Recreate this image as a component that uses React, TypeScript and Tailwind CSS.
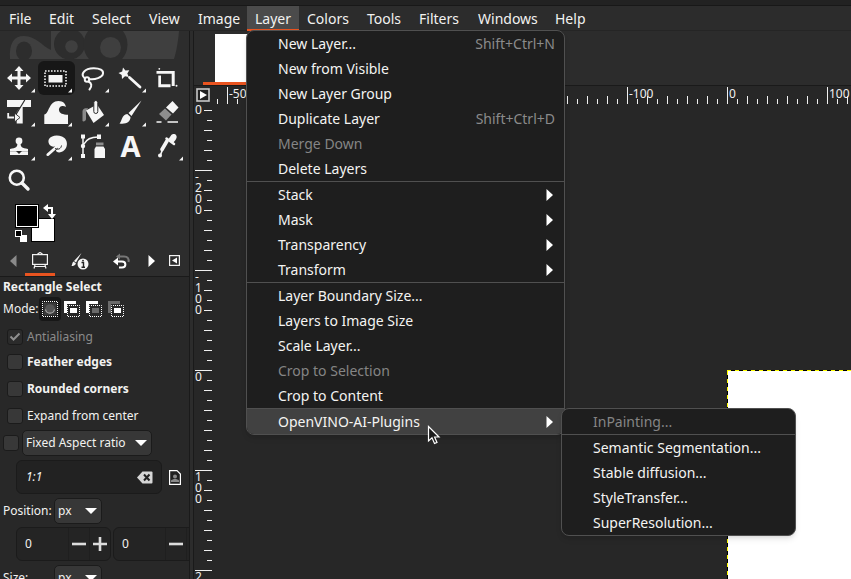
import type { ReactNode } from "react";

const MENUS = ["File", "Edit", "Select", "View", "Image", "Layer", "Colors", "Tools", "Filters", "Windows", "Help"];

type Entry = { label: string; keys?: string; disabled?: boolean; sub?: boolean; active?: boolean };

const LAYER_MENU: Entry[][] = [
  [
    { label: "New Layer...", keys: "Shift+Ctrl+N" },
    { label: "New from Visible" },
    { label: "New Layer Group" },
    { label: "Duplicate Layer", keys: "Shift+Ctrl+D" },
    { label: "Merge Down", disabled: true },
    { label: "Delete Layers" },
  ],
  [
    { label: "Stack", sub: true },
    { label: "Mask", sub: true },
    { label: "Transparency", sub: true },
    { label: "Transform", sub: true },
  ],
  [
    { label: "Layer Boundary Size..." },
    { label: "Layers to Image Size" },
    { label: "Scale Layer..." },
    { label: "Crop to Selection", disabled: true },
    { label: "Crop to Content" },
  ],
  [{ label: "OpenVINO-AI-Plugins", sub: true, active: true }],
];

const PLUGIN_MENU: Entry[][] = [
  [{ label: "InPainting...", disabled: true }],
  [
    { label: "Semantic Segmentation..." },
    { label: "Stable diffusion..." },
    { label: "StyleTransfer..." },
    { label: "SuperResolution..." },
  ],
];

function MenuGroups({ groups, children }: { groups: Entry[][]; children?: ReactNode }) {
  return (
    <>
      {groups.map((group, g) => (
        <div key={g} role="group" className={g > 0 ? "border-t border-[#505050]" : ""}>
          {group.map((e) => (
            <div key={e.label} className={e.active ? "relative rounded-b-[7px] bg-[#414141]" : ""}>
              <button
                role="menuitem"
                disabled={e.disabled}
                className={`flex h-[25px] w-full items-center justify-between pr-[9px] pl-[31px] whitespace-nowrap ${e.disabled ? "text-[#858585]" : "text-[#f4f4f2]"}`}
              >
                <span>{e.label}</span>
                {e.keys && <span className="text-[#8b8b8b]">{e.keys}</span>}
                {e.sub && (
                  <svg width="7" height="12" className="mr-[2px]" fill="#fff">
                    <path d="M0.500 0L7 6L0.500 12Z" />
                  </svg>
                )}
              </button>
              {e.active && children}
            </div>
          ))}
        </div>
      ))}
    </>
  );
}

const W = "#f6f6f6";

const TOOLS: { name: string; more?: boolean; art: ReactNode }[] = [
  {
    name: "Move",
    more: true,
    art: (
      <g fill={W}>
        <path d="M18 5l4.500 5h-3v5.500h5.500v-3l5 4.500l-5 4.500v-3h-5.500v5.500h3l-4.500 5l-4.500-5h3v-5.500h-5.500v3l-5-4.500l5-4.500v3h5.500v-5.500h-3z" />
      </g>
    ),
  },
  {
    name: "Rectangle Select",
    more: true,
    art: (
      <>
        <rect x="7" y="10" width="21" height="15" fill="none" stroke={W} strokeWidth="1.6" strokeDasharray="1.6 1.4" />
        <rect x="10.500" y="14" width="14" height="7.500" fill={W} />
      </>
    ),
  },
  {
    name: "Free Select",
    more: true,
    art: (
      <g fill="none" stroke={W} strokeWidth="2" strokeLinecap="round">
        <path d="M9.500 17C5 13 9.500 7.500 18.500 7.300C25 7.200 28.500 9.500 28 12.500C27.400 16.500 20 19 14 18" />
        <circle cx="12" cy="18.500" r="2.200" />
        <path d="M13.500 20.500C16.500 22 17.500 25 14.500 28.500" />
      </g>
    ),
  },
  {
    name: "Fuzzy Select",
    more: true,
    art: (
      <>
        <path d="M11 6.500L13.400 9.600L17.300 9.200L15.300 12.500L16.800 16L13 15.300L10 18L9.700 14L6.500 12L10.200 10.500Z" fill={W} />
        <path d="M17.500 16.500L28 26" stroke={W} strokeWidth="2.800" strokeLinecap="round" />
      </>
    ),
  },
  {
    name: "Crop",
    art: (
      <g fill={W}>
        <path d="M7.500 10H25.700V25H22.700V12.700H7.500Z" />
        <path d="M9.300 14.500H12V23.300H21.500V26.300H9.300Z" />
        <circle cx="10.300" cy="7.800" r="0.900" />
        <circle cx="27.500" cy="24.700" r="1" />
      </g>
    ),
  },
  {
    name: "Unified Transform",
    more: true,
    art: (
      <>
        <path d="M6 5H30V12H21.700V28.500H15.700V17L19.500 12H6Z" fill={W} />
        <path d="M23.800 5L15 19.500" stroke="#2b2b2b" strokeWidth="1.200" />
        <path d="M7.200 18V22.500H15" fill="none" stroke={W} strokeWidth="1.800" />
        <path d="M13.500 18L19 22.500L13.500 27Z" fill={W} stroke="#2b2b2b" strokeWidth="0.900" />
      </>
    ),
  },
  {
    name: "Warp Transform",
    more: true,
    art: (
      <path
        d="M6.300 29V19.500C11.500 18.500 10.500 6 20.500 6C25 6 27.800 8.800 27.800 12C25.500 9.800 20.500 11 21 15.300C21.300 18.300 25 19.800 30 19.800V29Z"
        fill={W}
      />
    ),
  },
  {
    name: "Bucket Fill",
    more: true,
    art: (
      <>
        <path d="M7.500 26V17C7.500 14 9 13.300 13 13L11 17V24C11 26 8.500 27 7.500 26Z" fill="#8a8a8a" />
        <path d="M11 15.500L22 9.500L29 20L18.500 28Z" fill={W} />
        <rect x="18.800" y="5.500" width="4" height="13" rx="2" fill={W} stroke="#2b2b2b" strokeWidth="1" />
      </>
    ),
  },
  {
    name: "Paintbrush",
    more: true,
    art: (
      <g fill={W}>
        <path d="M29.500 5.500L16.500 18L19.500 21Z" />
        <path d="M15.300 19L18.500 22C18.500 27 14 29.500 7.500 28.500C10 26.500 9.500 19.500 15.300 19Z" />
      </g>
    ),
  },
  {
    name: "Eraser",
    art: (
      <>
        <path d="M23.500 6L29.500 12.500L24 18.500L17 12.500Z" fill={W} />
        <path d="M16 13.500L22.500 19.500L17 25.500L10 19Z" fill="#8e8e8e" />
        <path d="M7.500 27H12.500M18.500 27H29" stroke={W} strokeWidth="1.600" />
      </>
    ),
  },
  {
    name: "Clone",
    more: true,
    art: (
      <>
        <circle cx="18" cy="12" r="3.400" fill={W} />
        <path d="M16.500 14H19.500C19.500 18 21 19 27 20V22.500H9V20C15 19 16.500 18 16.500 14Z" fill={W} />
        <path d="M9 22.500H27V26H9Z" fill={W} />
        <path d="M15 22H21L18 25Z" fill="#2b2b2b" />
      </>
    ),
  },
  {
    name: "Smudge",
    more: true,
    art: (
      <>
        <path
          d="M11 10C13 6.500 19 5.500 24 7.500C29 9.500 30 15 28 19C26 23 21 24.500 18.500 22.500C17 21 20 20.500 20 18.500L11 26.500C9 28 7.500 26 9 24.500L17 17.500C12.500 18.500 9 14 11 10Z"
          fill={W}
        />
        <path d="M17 19.500C20 21 23 20 23.500 16.500" fill="none" stroke="#2b2b2b" strokeWidth="1" />
      </>
    ),
  },
  {
    name: "Paths",
    art: (
      <>
        <path d="M8 8V26M9 15C12 9 17 8 23 8" fill="none" stroke={W} strokeWidth="1.500" />
        <path d="M6 5.500H10V9.500H6ZM6 25H10V29H6ZM22 5.500H26V10H22Z" fill={W} />
        <circle cx="8" cy="17" r="2.200" fill={W} />
        <rect x="21" y="13.500" width="7.500" height="2.800" fill="#8e8e8e" />
        <path d="M19.500 20L21 17.500H28.500L30 20V29H19.500Z" fill={W} />
      </>
    ),
  },
  { name: "Text", art: null },
  {
    name: "Color Picker",
    more: true,
    art: (
      <>
        <path d="M18 12L13 20.500" stroke={W} strokeWidth="3.600" strokeLinecap="round" />
        <path d="M14 19L11.500 26" stroke={W} strokeWidth="1.600" />
        <path d="M17.500 9.500L25 15" stroke={W} strokeWidth="2.500" strokeLinecap="round" />
        <path d="M19.500 10L22 6.500C23 4.500 26 4.500 27 6C28.300 7.500 27.500 9.500 26.500 11L24 14Z" fill={W} />
        <circle cx="11" cy="26.500" r="2" fill={W} />
      </>
    ),
  },
  {
    name: "Zoom",
    art: (
      <>
        <circle cx="15.800" cy="14.700" r="7" fill="none" stroke={W} strokeWidth="2.600" />
        <path d="M21 20L27 26" stroke={W} strokeWidth="3.400" strokeLinecap="round" />
      </>
    ),
  },
];

function Toolbox() {
  return (
    <div className="grid grid-cols-[repeat(5,37px)] pt-[2px] pl-[1px]">
      {TOOLS.map((t) => (
        <button
          key={t.name}
          aria-label={t.name}
          className={`grid h-[34px] place-items-center rounded-md ${t.name === "Rectangle Select" ? "bg-[#171717]" : ""}`}
        >
          {t.art ? (
            <svg width="37" height="34" viewBox="0 0 37 34">
              {t.art}
              {t.more && <path d="M34 27.500V31.500H30Z" fill={W} />}
            </svg>
          ) : (
            <span className="text-[29px] leading-[34px] font-bold text-[#f6f6f6]">A</span>
          )}
        </button>
      ))}
    </div>
  );
}

function Banner() {
  return (
    <svg width="187" height="28" viewBox="0 0 187 28" className="block">
      <path d="M10 28C9 12 14 5 24 5C36 5 42 15 51 19V0H179C178 12 176 22 174 28Z" fill="#3f3f3f" />
      <ellipse cx="24" cy="20" rx="8" ry="9.500" fill="#2d2d2d" />
      <circle cx="69.500" cy="13" r="15.500" fill="#2d2d2d" />
      <circle cx="71.500" cy="15.500" r="6.300" fill="#3f3f3f" />
      <circle cx="105.500" cy="13.500" r="22" fill="#2d2d2d" />
      <circle cx="110.500" cy="16.500" r="10.500" fill="#3f3f3f" />
    </svg>
  );
}

function ColorArea() {
  return (
    <svg width="60" height="42" viewBox="0 0 60 42" className="mt-[6px] block" role="img" aria-label="Foreground and background colors">
      <rect x="31.500" y="15.500" width="23" height="23" fill="#fff" stroke="#000" />
      <rect x="15" y="1" width="24" height="24" fill="#000" />
      <rect x="16.500" y="2.500" width="21" height="21" fill="#000" stroke="#fff" />
      <rect x="20" y="32" width="7" height="7" fill="#fff" />
      <rect x="15.500" y="27.500" width="6" height="6" fill="#000" stroke="#fff" />
      <path d="M46 5H52V12" fill="none" stroke="#fff" strokeWidth="2" />
      <path d="M43 5L48 1V9ZM52 16L48 11H56Z" fill="#fff" />
    </svg>
  );
}

function DockTabs() {
  return (
    <div className="flex h-8 items-stretch border-b border-[#1a1a1a] pl-[2px]">
      <button aria-label="Previous tab" className="grid w-5 place-items-center pt-[1px]">
        <svg width="7" height="12" className="mr-[-5px]"><path d="M6.500 0V12L0 6Z" fill="#8a8a8a" /></svg>
      </button>
      <div role="tablist" className="flex">
        <button role="tab" aria-label="Tool Options" className="flex w-10 justify-center">
          <span className="grid w-[30px] place-items-center border-b-3 border-[#e95420] pt-[3px]">
            <svg width="18" height="17" viewBox="0 0 18 17" fill="none" stroke="#f2f2f2" strokeWidth="1.200">
              <rect x="1.600" y="2.600" width="14.800" height="9.800" />
              <path d="M6.500 2L9 0.500L11.500 2M4 13L3 16.500M14 13L15 16.500M3.500 14.500H14.500" />
            </svg>
          </span>
        </button>
        <button role="tab" aria-label="Device Status" className="grid w-10 place-items-center">
          <svg width="18" height="18" viewBox="0 0 18 18">
            <path d="M10.500 1L5 10.500L3 9Z" fill={W} />
            <path d="M2.500 9.500L5 11.500C4 13.500 2.500 14 0.500 14C1.500 12.500 1 10.500 2.500 9.500Z" fill={W} />
            <circle cx="12" cy="12" r="5.500" fill={W} />
            <path d="M10.500 10.500H12.500V15M10.500 15.200H14" fill="none" stroke="#222" strokeWidth="1.400" />
            <circle cx="12" cy="8.600" r="0.900" fill="#222" />
          </svg>
        </button>
        <button role="tab" aria-label="Undo History" className="grid w-[42px] place-items-center">
          <svg width="18" height="16" viewBox="0 0 18 16" fill="none">
            <path d="M6 3.500H12C16 3.500 17 6 16.500 9" stroke="#777" strokeWidth="2" />
            <path d="M8 0.500V6.500L4 3.500Z" fill="#777" />
            <path d="M5 8.500H10C14.500 8.500 14.500 14.500 10 14.500H7" stroke="#fff" strokeWidth="2" />
            <path d="M6 4.500V12.500L1 8.500Z" fill="#fff" />
          </svg>
        </button>
      </div>
      <button aria-label="Next tab" className="grid w-5 place-items-center">
        <svg width="7" height="12"><path d="M0.500 0V12L7 6Z" fill="#fff" /></svg>
      </button>
      <button aria-label="Configure this tab" className="grid w-8 place-items-center">
        <svg width="11" height="11"><rect x="0.600" y="0.600" width="9.800" height="9.800" fill="none" stroke="#f2f2f2" strokeWidth="1.200" /><path d="M8 2.500V8.500L3 5.500Z" fill="#fff" /></svg>
      </button>
    </div>
  );
}

const MODES = [
  { name: "Replace", a: "", b: "" },
  { name: "Add", a: "#fff", b: "#fff" },
  { name: "Subtract", a: "#fff", b: "#6a6a6a" },
  { name: "Intersect", a: "#6a6a6a", b: "#fff" },
];

function ModeIcon({ a, b }: { a: string; b: string }) {
  if (!a)
    return (
      <svg width="16" height="16" viewBox="0 0 16 16">
        <rect x="1.500" y="1.500" width="13" height="13" fill="#3a3a3a" />
        <rect x="0.500" y="0.500" width="15" height="15" fill="none" stroke="#fff" strokeWidth="1" strokeDasharray="1 1" strokeDashoffset="0.500" />
        <circle cx="8" cy="8" r="4.800" fill="#555" />
        <path d="M3.500 8.500A4.600 4.600 0 0 0 12.500 8.500" fill="none" stroke="#aaa" strokeWidth="1.200" />
      </svg>
    );
  return (
    <svg width="16" height="16" viewBox="0 0 16 16">
      <path d="M0 0H12V3H3V12H0Z" fill={a} />
      <rect x="3.500" y="4.500" width="12" height="11" fill="#282828" />
      <rect x="3.500" y="4.500" width="12" height="11" fill="none" stroke="#fff" strokeDasharray="1 1" strokeDashoffset="0.500" />
      <rect x="6" y="7" width="7" height="5" fill={b} />
    </svg>
  );
}

function Check({ id, checked, disabled, label }: { id: string; checked?: boolean; disabled?: boolean; label?: string }) {
  return (
    <span className="grid size-4 shrink-0">
      <input
        id={id}
        type="checkbox"
        aria-label={label}
        defaultChecked={checked}
        disabled={disabled}
        className={`col-start-1 row-start-1 size-4 appearance-none rounded-[3px] border border-[#1b1b1b] ${disabled ? "bg-[#2b2b2b]" : "bg-[#383838]"}`}
      />
      {checked && (
        <svg width="16" height="16" className="pointer-events-none col-start-1 row-start-1">
          <path d="M3.500 7.500L6.500 10.500L12.500 4.500" fill="none" stroke="#8f8f8f" strokeWidth="2" />
        </svg>
      )}
    </span>
  );
}

function CheckRow({ id, text, bold, checked, disabled, tall }: { id: string; text: string; bold?: boolean; checked?: boolean; disabled?: boolean; tall?: boolean }) {
  return (
    <div className={`flex items-center gap-1 pl-[6px] ${tall ? "h-[27px]" : "h-[25px]"}`}>
      <Check id={id} checked={checked} disabled={disabled} />
      <label htmlFor={id} className={`${bold ? "font-bold" : ""} ${disabled ? "text-[#8b8b8b]" : ""}`}>
        {text}
      </label>
    </div>
  );
}

function Select({ id, value, wide, label }: { id: string; value: string; wide?: boolean; label?: string }) {
  return (
    <span className={`grid h-[26px] items-center ${wide ? "w-[130px]" : "w-12"}`}>
      <select
        id={id}
        aria-label={label}
        className="col-start-1 row-start-1 size-full appearance-none rounded-[5px] border border-[#1b1b1b] bg-[#373737] pl-[3px]"
      >
        <option>{value}</option>
      </select>
      <svg width="12" height="6" className="pointer-events-none col-start-1 row-start-1 mr-[5px] justify-self-end">
        <path d="M0 0H12L6 6Z" fill="#fff" />
      </svg>
    </span>
  );
}

function Spin({ label }: { label: string }) {
  return (
    <div className="flex h-[34px] w-[95px] shrink-0 rounded-md border border-[#1b1b1b] bg-[#242424]">
      <input aria-label={label} defaultValue="0" className="w-[51px] bg-transparent pl-2 outline-none" />
      <button aria-label={`Decrease ${label}`} className="grid w-[21px] place-items-center border-l border-[#1f1f1f]">
        <svg width="14" height="14"><path d="M0 7H14" stroke="#ddd" strokeWidth="2.600" /></svg>
      </button>
      <button aria-label={`Increase ${label}`} className="grid w-[21px] place-items-center border-l border-[#1f1f1f]">
        <svg width="14" height="14"><path d="M0 7H14M7 0V14" stroke="#ddd" strokeWidth="2.600" /></svg>
      </button>
    </div>
  );
}

function ToolOptions() {
  return (
    <div className="flex min-h-0 flex-1 flex-col overflow-hidden bg-[#282828] pl-[1px] text-[12px] text-[#f2f2f0]">
      <h2 className="h-5 shrink-0 pl-[2px] leading-5 font-bold">Rectangle Select</h2>
      <div className="flex h-6 shrink-0 items-center pl-[2px]">
        <span className="w-9">Mode:</span>
        {MODES.map((m) => (
          <button key={m.name} aria-label={m.name} className={`grid h-6 w-[22px] place-items-center rounded ${m.a ? "" : "bg-[#171717]"}`}>
            <ModeIcon a={m.a} b={m.b} />
          </button>
        ))}
      </div>
      <div className="flex shrink-0 flex-col pt-[3px]">
        <CheckRow id="aa" text="Antialiasing" checked disabled />
        <CheckRow id="feather" text="Feather edges" bold />
        <div className="pt-[1px]">
          <CheckRow id="rounded" text="Rounded corners" bold tall />
          <CheckRow id="expand" text="Expand from center" tall />
        </div>
        <div className="flex h-7 items-center gap-[3px] pl-[2px]">
          <Check id="fixed" label="Fixed" />
          <Select id="fixed-mode" value="Fixed Aspect ratio" wide label="Fixed mode" />
        </div>
      </div>
      <div className="mt-[3px] flex shrink-0 items-center gap-[7px] pl-[15px]">
        <div className="flex h-[34px] w-[146px] items-center rounded-md border border-[#1b1b1b] bg-[#222]">
          <input aria-label="Aspect ratio" defaultValue="1:1" className="min-w-0 flex-1 bg-transparent pl-[9px] italic outline-none" />
          <button aria-label="Clear" className="mr-2">
            <svg width="16" height="13" viewBox="0 0 16 13">
              <path d="M5.500 0.500H14.500Q15.500 0.500 15.500 1.500V11.500Q15.500 12.500 14.500 12.500H5.500L0 6.500Z" fill="#d6d6d6" />
              <path d="M7 3.500L12.500 9.500M12.500 3.500L7 9.500" stroke="#222" strokeWidth="2" />
            </svg>
          </button>
        </div>
        <button aria-label="Portrait">
          <svg width="12" height="15" viewBox="0 0 12 15">
            <path d="M0.600 0.600H8L11.400 4V14.400H0.600Z" fill="#222" stroke="#fff" strokeWidth="1.200" />
            <circle cx="6" cy="6.500" r="2" fill="#8a8a8a" />
            <path d="M2 12V10.500C4 8.500 8 8.500 10 10.500V12Z" fill="#8a8a8a" />
          </svg>
        </button>
      </div>
      <div className="mt-1 flex shrink-0 items-center pl-[2px]">
        <label htmlFor="pos-unit" className="w-[51px]">Position:</label>
        <Select id="pos-unit" value="px" />
      </div>
      <div className="mt-[3px] flex shrink-0 gap-[2px] pl-[15px]">
        <Spin label="Position X" />
        <Spin label="Position Y" />
      </div>
      <div className="mt-1 flex shrink-0 items-center pl-[2px]">
        <label htmlFor="size-unit" className="w-[51px]">Size:</label>
        <Select id="size-unit" value="px" />
      </div>
    </div>
  );
}

const ORIGIN_X = 515;
const ORIGIN_Y = 266;
const H_TICKS = Array.from({ length: 180 }, (_, i) => (i - 51) * 10);
const V_TICKS = Array.from({ length: 100 }, (_, i) => (i - 26) * 10);

function HorizontalRuler() {
  return (
    <svg width="100%" height="18" className="block text-[12px]" fill="#f0f0f0" shapeRendering="crispEdges">
      {H_TICKS.map((v) => {
        const h = v % 100 === 0 ? 17 : v % 20 === 0 ? 8 : 5;
        return <rect key={v} x={v + ORIGIN_X} y={18 - h} width="1" height={h} />;
      })}
      {H_TICKS.filter((v) => v % 100 === 0).map((v) => (
        <text key={v} x={v + ORIGIN_X + 2} y="12">{v}</text>
      ))}
    </svg>
  );
}

function VerticalRuler() {
  return (
    <svg width="17" height="100%" className="block text-[12px]" fill="#f0f0f0" shapeRendering="crispEdges">
      {V_TICKS.map((v) => {
        const w = v % 100 === 0 ? 17 : v % 20 === 0 ? 8 : 5;
        return <rect key={v} x={17 - w} y={v + ORIGIN_Y} width={w} height="1" />;
      })}
      <text x="0" y="10">0</text>
      {V_TICKS.filter((v) => v % 100 === 0).map((v) => (
        <text key={v}>
          {String(v).split("").map((c, i) => (
            <tspan key={i} x="0" y={v + ORIGIN_Y + 11 * (i + 1)}>{c}</tspan>
          ))}
        </text>
      ))}
    </svg>
  );
}

export default function App() {
  return (
    <div className="flex h-screen flex-col overflow-hidden bg-[#2c2c2c] font-['Noto_Sans','Open_Sans',sans-serif] text-[14px] text-[#f2f2f0]">
      <div className="h-[6px] shrink-0 border-b border-[#181818] bg-[#222]" />
      <nav
        role="menubar"
        className="grid h-[25px] shrink-0 grid-cols-[40px_43px_57px_49px_57px_52px_60px_52px_59px_77px_46px] border-b border-[#252525] pl-[1px]"
      >
        {MENUS.map((m) => (
          <div key={m} className="relative">
            <button
              role="menuitem"
              className={`h-[25px] w-full px-2 text-left ${m === "Layer" ? "border-b-2 border-[#e95420] bg-[#4b4b4b] pt-[2px]" : ""}`}
            >
              {m}
            </button>
            {m === "Layer" && (
              <div role="menu" className="absolute top-6 left-[-1px] z-10 w-[319px] rounded-lg border border-[#505050] bg-[#1e1e1e] shadow-md">
                <MenuGroups groups={LAYER_MENU}>
                  <div role="menu" className="absolute top-[-1px] left-[314px] w-[235px] rounded-lg border border-[#505050] bg-[#1e1e1e] shadow-md">
                    <MenuGroups groups={PLUGIN_MENU} />
                  </div>
                  <svg width="14" height="20" viewBox="0 0 14 20" className="pointer-events-none absolute top-[16px] left-[180px]">
                    <path d="M1.500 1.500V16L5 12.800L7.500 18.500L10 17.400L7.600 12H12Z" fill="#1c1c1c" stroke="#fff" strokeWidth="1.200" />
                  </svg>
                </MenuGroups>
              </div>
            )}
          </div>
        ))}
      </nav>
      <div className="flex min-h-0 flex-1">
        <aside className="flex w-[190px] shrink-0 flex-col overflow-hidden border-r border-[#1a1a1a] bg-[#2d2d2d]">
          <Banner />
          <Toolbox />
          <ColorArea />
          <DockTabs />
          <ToolOptions />
        </aside>
        <main className="ml-[3px] flex min-w-0 flex-1 flex-col border-l border-[#1a1a1a] bg-[#272727]">
          <div className="flex h-[55px] shrink-0 border-b border-[#1a1a1a] bg-[#2c2c2c]">
            <button aria-label="Image 1" className="ml-[9px] flex w-[120px] flex-col border-b-3 border-[#e95420] pt-[3px] pl-3">
              <span className="block h-12 w-16 bg-white" />
            </button>
          </div>
          <div className="flex shrink-0">
            <button aria-label="Image menu" className="grid h-[18px] w-[18px] shrink-0 place-items-center">
              <svg width="14" height="14" className="mr-[1px]">
                <rect x="1" y="1" width="12" height="12" fill="#222" stroke="#c8c8c8" strokeWidth="1.600" />
                <path d="M4 3V11L11 7Z" fill="#fff" />
              </svg>
            </button>
            <div className="min-w-0 flex-1">
              <HorizontalRuler />
            </div>
          </div>
          <div className="flex min-h-0 flex-1">
            <div className="w-[18px] shrink-0 overflow-hidden pl-[1px]">
              <VerticalRuler />
            </div>
            <div className="relative min-w-0 flex-1 overflow-hidden">
              <div className="absolute top-[266px] left-[515px] h-[720px] w-[1280px] bg-[repeating-linear-gradient(90deg,#ff0_0_4px,#000_4px_8px)] pt-[1px]">
                <div className="h-full bg-[repeating-linear-gradient(180deg,#ff0_0_4px,#000_4px_8px)] pl-[1px]">
                  <div className="h-full bg-white" />
                </div>
              </div>
            </div>
          </div>
        </main>
      </div>
    </div>
  );
}
